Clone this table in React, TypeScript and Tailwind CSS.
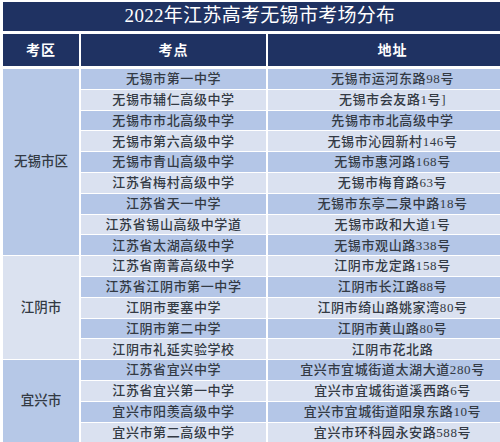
const sections = [
  {
    area: "无锡市区",
    tone: "dark",
    rows: [
      ["无锡市第一中学", "无锡市运河东路98号"],
      ["无锡市辅仁高级中学", "无锡市会友路1号]"],
      ["无锡市市北高级中学", "先锡市市北高级中学"],
      ["无锡市第六高级中学", "无锡市沁园新村146号"],
      ["无锡市青山高级中学", "无锡市惠河路168号"],
      ["江苏省梅村高级中学", "无锡市梅育路63号"],
      ["江苏省天一中学", "无锡市东亭二泉中路18号"],
      ["江苏省锡山高级中学道", "无锡市政和大道1号"],
      ["江苏省太湖高级中学", "无锡市观山路338号"],
    ],
  },
  {
    area: "江阴市",
    tone: "light",
    rows: [
      ["江苏省南菁高级中学", "江阴市龙定路158号"],
      ["江苏省江阴市第一中学", "江阴市长江路88号"],
      ["江阴市要塞中学", "江阴市绮山路姚家湾80号"],
      ["江阴市第二中学", "江阴市黄山路80号"],
      ["江阴市礼延实验学校", "江阴市花北路"],
    ],
  },
  {
    area: "宜兴市",
    tone: "dark",
    rows: [
      ["江苏省宜兴中学", "宜兴市宜城街道太湖大道280号"],
      ["江苏省宜兴第一中学", "宜兴市宜城街道溪西路6号"],
      ["宜兴市阳羡高级中学", "宜兴市宜城街道阳泉东路10号"],
      ["宜兴市第二高级中学", "宜兴市环科园永安路588号"],
    ],
  },
];

const font = { fontFamily: '"Liberation Serif", "Noto Sans CJK SC", serif' };

export default function App() {
  let rowIndex = 0;

  return (
    <div className="w-[500px] h-[442px] overflow-hidden bg-white" style={font}>
      <div className="w-[514px] ml-[3px] pt-[2px] flex flex-col">
        {/* Title */}
        <div className="h-[29px] bg-[#1f3262] flex items-center justify-center text-white text-[19px] tracking-[0.3px]">
          2022年江苏高考无锡市考场分布
        </div>

        {/* Header */}
        <div className="mt-[3px] h-[32px] flex gap-[2px] text-white text-[14px] font-bold">
          <div className="w-[76px] bg-[#1f3262] flex items-center justify-center tracking-[1px]">考区</div>
          <div className="w-[185px] bg-[#1f3262] flex items-center justify-center tracking-[1px]">考点</div>
          <div className="flex-1 bg-[#1f3262] flex items-center justify-center tracking-[1px]">地址</div>
        </div>

        {/* Body */}
        <div className="mt-[3px] flex flex-col gap-[1px]">
          {sections.map((section) => (
            <div key={section.area} className="flex gap-[2px]">
              <div
                className={`w-[76px] flex items-center justify-center text-[13.5px] font-medium text-[#333a44] ${
                  section.tone === "dark" ? "bg-[#b6c8e7]" : "bg-[#dbe2f0]"
                }`}
              >
                {section.area}
              </div>
              <div className="flex-1 flex flex-col gap-[1px]">
                {section.rows.map(([school, address]) => {
                  const dark = rowIndex++ % 2 === 0;
                  const bg = dark ? "bg-[#b4c6e7]" : "bg-[#dae1f0]";
                  return (
                    <div key={school} className="h-[19.8px] flex gap-[2px] text-[13px] font-medium text-[#333a44] tracking-[0.6px]">
                      <div className={`w-[185px] flex items-center justify-center ${bg}`}>{school}</div>
                      <div className={`flex-1 flex items-center justify-center ${bg}`}>{address}</div>
                    </div>
                  );
                })}
              </div>
            </div>
          ))}
        </div>
      </div>
    </div>
  );
}
